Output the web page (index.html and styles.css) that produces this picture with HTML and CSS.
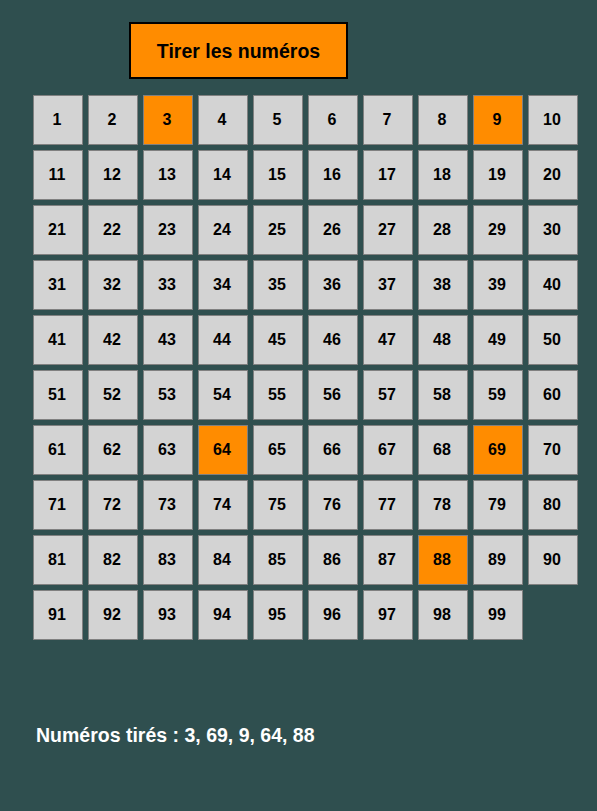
FILE: index.html
```html
<!DOCTYPE html>
<html lang="fr">
<head>
    <meta charset="UTF-8">
    <meta name="viewport" content="width=device-width, initial-scale=1.0">
    <title>Tirage du loto</title>
    <link rel="stylesheet" href="styles.css">
</head>
<body>
    <button class="tirer">Tirer les numéros</button>
    <div class="grille" id="grille"></div>
    <p class="resultat" id="resultat">Numéros tirés : 3, 69, 9, 64, 88</p>
    <script>
        var tires = [3, 69, 9, 64, 88];
        var grille = document.getElementById('grille');
        for (let i = 1; i <= 99; i++) {
            let case_ = document.createElement('div');
            case_.className = 'case';
            if (tires.indexOf(i) !== -1) {
                case_.className += ' tire';
            }
            case_.textContent = i;
            grille.appendChild(case_);
        }
    </script>
</body>
</html>
```

FILE: styles.css
```css
body { margin: 8px; background-color: darkslategray; font-family: "Liberation Sans", Arial, sans-serif; }

.tirer { display: block; width: 219px; height: 57px; margin: 14px 0 16px 121px; padding: 2px 0 0; background-color: darkorange; border: 2px solid black; font-family: "Liberation Sans", Arial, sans-serif; font-size: 19.5px; font-weight: bold; color: black; cursor: pointer; }

.grille { display: grid; grid-template-columns: repeat(10, 50px); gap: 5px; padding-left: 25px; }
.case { box-sizing: border-box; height: 50px; padding-right: 2px; display: flex; align-items: center; justify-content: center; background-color: lightgray; border: 1px solid gray; font-size: 16px; font-weight: bold; color: black; }
.case.tire { background-color: darkorange; }

.resultat { margin: 84px 0 0 28px; font-size: 19.5px; font-weight: bold; color: white; }
```
